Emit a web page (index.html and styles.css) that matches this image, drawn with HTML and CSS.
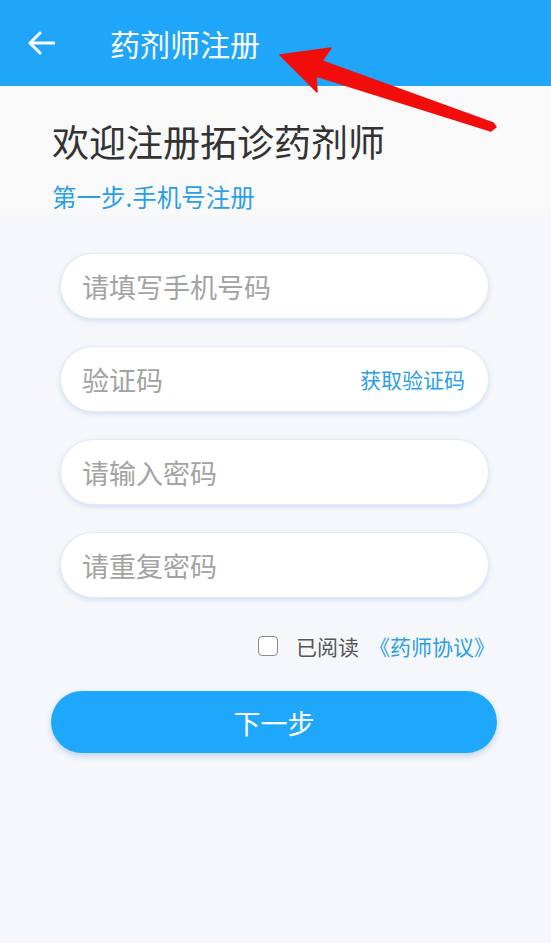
FILE: index.html
```html
<!DOCTYPE html>
<html lang="zh-CN">

<head>
  <meta charset="UTF-8" />
  <meta name="viewport" content="width=device-width, initial-scale=1.0" />
  <title>药剂师注册</title>
  <link rel="stylesheet" href="styles.css">
</head>

<body>
  <header class="top-bar">
    <svg class="back" viewBox="0 0 28 28" width="28" height="28">
      <path d="M27 14 H3 M13 4 L3 14 L13 24" fill="none" stroke="#fff" stroke-width="3" stroke-linecap="round" stroke-linejoin="round" />
    </svg>
    <h1 class="top-title">药剂师注册</h1>
  </header>

  <section class="intro">
    <h2 class="intro-title">欢迎注册拓诊药剂师</h2>
    <p class="intro-step">第一步.手机号注册</p>
  </section>

  <main class="register">
    <form class="register-form">
      <div class="field">
        <input type="text" placeholder="请填写手机号码" />
      </div>
      <div class="field">
        <input type="text" placeholder="验证码" />
        <span class="get-code">获取验证码</span>
      </div>
      <div class="field">
        <input type="password" placeholder="请输入密码" />
      </div>
      <div class="field">
        <input type="password" placeholder="请重复密码" />
      </div>

      <label class="agree">
        <input type="checkbox" />
        <span class="agree-text">已阅读</span>
        <span class="agree-link">《药师协议》</span>
      </label>

      <button type="button" class="next">下一步</button>
    </form>
  </main>

  <!-- annotation arrow drawn over the screenshot -->
  <svg class="mark" viewBox="0 0 551 943" width="551" height="943">
    <polygon points="280,55 331,48 322,61 493,123 496,127 491,131 316,76 317,92" fill="#f20d0d" stroke="#f20d0d" stroke-width="1.5" stroke-linejoin="round" />
  </svg>
</body>

</html>
```

FILE: styles.css
```css
* {
  font-family: "Noto Sans CJK SC", "Noto Sans", sans-serif;
  box-sizing: border-box;
}

body {
  margin: 0;
  padding: 0;
  background-color: #f5f7fb;
  color: #333;
  min-height: 943px;
}

/* Top bar */
.top-bar {
  display: flex;
  align-items: center;
  height: 86px;
  padding-left: 27px;
  background-color: #1fa6f8;
}

.back {
  display: block;
}

.top-title {
  margin: 0 0 0 55px;
  font-size: 30px;
  font-weight: 400;
  line-height: 40px;
  color: #fff;
}

/* Intro */
.intro {
  background-color: #f9f9fa;
  padding: 35px 0 0 52px;
  height: 129px;
}

.intro-title {
  margin: 0;
  font-size: 37px;
  font-weight: 400;
  line-height: 40px;
  color: #333;
}

.intro-step {
  margin: 21px 0 0;
  font-size: 24.5px;
  line-height: 30px;
  color: #2b9fe8;
}

/* Form */
.register-form {
  display: flex;
  flex-direction: column;
  padding-top: 38px;
}

.field {
  display: flex;
  align-items: center;
  height: 66px;
  margin: 0 62px 27px 60px;
  padding: 0 23px 0 21px;
  background: #fff;
  border: 1px solid #e3eaf6;
  border-radius: 33px;
  box-shadow: 0 2px 5px rgba(150, 180, 230, 0.35);
}

.field input {
  flex: 1;
  min-width: 0;
  border: none;
  outline: none;
  background: transparent;
  font-size: 27px;
  color: #333;
  padding: 0;
}

.field input::placeholder {
  color: #a3a3a3;
}

.get-code {
  font-size: 21px;
  color: #2b9fe8;
}

.agree {
  display: flex;
  align-items: center;
  justify-content: flex-end;
  height: 30px;
  margin: 6px 56px 0 0;
}

.agree input {
  appearance: none;
  width: 20px;
  height: 20px;
  margin: 0 18px 0 0;
  border: 1.5px solid #8a8a8a;
  border-radius: 4px;
  background: #fff;
}

.agree-text {
  font-size: 21px;
  color: #555;
  margin-right: 10px;
}

.agree-link {
  font-size: 21px;
  color: #2b9fe8;
}

.next {
  height: 62px;
  margin: 30px 54px 0 51px;
  background-color: #1fa8fb;
  color: #fff;
  border: none;
  border-radius: 31px;
  font-size: 27px;
  box-shadow: 0 3px 6px rgba(60, 130, 200, 0.3);
}

/* Annotation */
.mark {
  position: absolute;
  top: 0;
  left: 0;
  pointer-events: none;
}
```
